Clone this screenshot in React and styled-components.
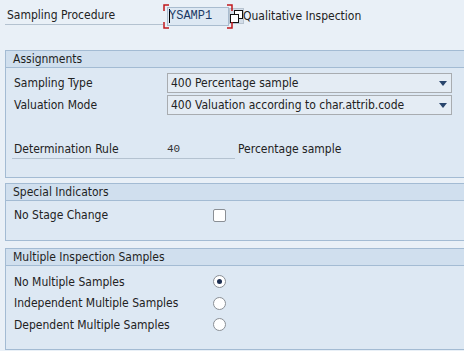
import React from "react";
import styled, { createGlobalStyle } from "styled-components";

const GlobalStyle = createGlobalStyle`
  html, body {
    margin: 0;
    padding: 0;
    background: #e9f0f7;
    overflow: hidden;
  }
  body {
    font-family: "DejaVu Sans Condensed", "DejaVu Sans", sans-serif;
    font-stretch: condensed;
    font-size: 12px;
    color: #222222;
  }
`;

const Page = styled.div`
  width: 464px;
  height: 351px;
  padding-top: 4px;
  box-sizing: border-box;
  background: #e9f0f7;
  white-space: nowrap;
`;

const TopRow = styled.div`
  display: flex;
  align-items: center;
  height: 24px;
  padding-left: 5px;
`;

const TopLabel = styled.div`
  width: 158px;
  height: 21px;
  line-height: 23px;
  padding-left: 2px;
  box-sizing: border-box;
  border-bottom: 1px solid #b4c2d0;
  align-self: flex-start;
`;

const FocusWrap = styled.div`
  position: relative;
  margin-left: 4px;
  display: flex;
  align-items: center;
`;

const Corners = styled.svg`
  position: absolute;
  left: -4px;
  top: -3px;
  pointer-events: none;
`;

const Field = styled.div`
  width: 62px;
  height: 19px;
  box-sizing: border-box;
  border: 1px solid #a9bccf;
  background: #dde8f3;
  font-family: "Liberation Mono", monospace;
  font-stretch: normal;
  font-size: 12px;
  color: #1b3a66;
  line-height: 17px;
  padding-left: 1px;
  display: flex;
  align-items: center;
`;

const Caret = styled.span`
  display: inline-block;
  width: 1px;
  height: 14px;
  background: #000;
  margin-right: -1px;
`;

const HelpButton = styled.div`
  width: 15px;
  height: 16px;
  box-sizing: border-box;
  border: 1px solid #b8c4d0;
  background: #d3dde8;
  display: flex;
  align-items: center;
  justify-content: center;
`;

const TopText = styled.div`
  margin-left: -1px;
`;

const Panel = styled.section`
  margin: ${(p) => p.$top}px -6px 0 5px;
  border: 1px solid #a3bbd3;
  background: #dde8f3;
`;

const PanelHeader = styled.div`
  height: 16px;
  line-height: 16px;
  padding-left: 7px;
  background: #d0dfee;
  border-bottom: 1px solid #a3bbd3;
  color: #1f1f1f;
`;

const PanelBody = styled.div`
  padding: ${(p) => p.$pt}px 0 ${(p) => p.$pb}px 8px;
`;

const Row = styled.div`
  display: flex;
  align-items: center;
  height: ${(p) => p.$h || 22}px;
`;

const Label = styled.div`
  width: ${(p) => p.$w || 153}px;
  flex: none;
`;

const Select = styled.div`
  width: 285px;
  height: 20px;
  box-sizing: border-box;
  border: 1px solid #a8acb0;
  background: #e4ecf4;
  display: flex;
  align-items: center;
  justify-content: space-between;
  padding: 0 4px 0 3px;
`;

const Arrow = styled.span`
  width: 0;
  height: 0;
  border-left: 4px solid transparent;
  border-right: 4px solid transparent;
  border-top: 5px solid #27446c;
`;

const Spacer = styled.div`
  height: 22px;
`;

const RuleLine = styled.div`
  display: flex;
  align-items: center;
  width: 223px;
  height: 21px;
  margin-left: -2px;
  padding-left: 2px;
  box-sizing: border-box;
  border-bottom: 1px solid #b4c2d0;
  align-self: flex-start;
  padding-top: 2px;
`;

const RuleValue = styled.span`
  font-family: "Liberation Mono", monospace;
  font-stretch: normal;
  font-size: 11px;
  color: #333;
`;

const RuleText = styled.div`
  margin-left: 3px;
`;

const Check = styled.span`
  display: inline-block;
  width: 13px;
  height: 13px;
  box-sizing: border-box;
  border: 1px solid #8a8f95;
  border-radius: 2px;
  background: #fff;
`;

const Radio = styled.span`
  display: inline-flex;
  align-items: center;
  justify-content: center;
  width: 13px;
  height: 13px;
  box-sizing: border-box;
  border: 1px solid #8a8f95;
  border-radius: 50%;
  background: #fff;
  &::after {
    content: "";
    width: 5px;
    height: 5px;
    border-radius: 50%;
    background: ${(p) => (p.$on ? "#1d2f52" : "transparent")};
  }
`;

const App = () => {
  const samples = [
    { text: "No Multiple Samples", on: true },
    { text: "Independent Multiple Samples", on: false },
    { text: "Dependent Multiple Samples", on: false },
  ];
  return (
    <>
      <GlobalStyle />
      <Page>
        <TopRow>
          <TopLabel>Sampling Procedure</TopLabel>
          <FocusWrap>
            <Corners width="70" height="25" viewBox="0 0 70 25">
              <g stroke="#c0171d" strokeWidth="1.5" fill="none">
                <path d="M1 7 V1 H6" />
                <path d="M1 18 V24 H6" />
                <path d="M69 7 V1 H64" />
                <path d="M69 18 V24 H64" />
              </g>
            </Corners>
            <Field>
              <Caret />
              YSAMP1
            </Field>
          </FocusWrap>
          <HelpButton>
            <svg width="13" height="13" viewBox="0 0 13 13">
              <rect x="4.5" y="0.5" width="8" height="8" fill="#fff" stroke="#111" />
              <rect x="0.5" y="4.5" width="8" height="8" fill="#fff" stroke="#111" />
            </svg>
          </HelpButton>
          <TopText>Qualitative Inspection</TopText>
        </TopRow>

        <Panel $top={22}>
          <PanelHeader>Assignments</PanelHeader>
          <PanelBody $pt={4} $pb={17}>
            <Row>
              <Label>Sampling Type</Label>
              <Select>
                400 Percentage sample
                <Arrow />
              </Select>
            </Row>
            <Row>
              <Label>Valuation Mode</Label>
              <Select>
                400 Valuation according to char.attrib.code
                <Arrow />
              </Select>
            </Row>
            <Spacer />
            <Row>
              <RuleLine>
                <Label>Determination Rule</Label>
                <RuleValue>40</RuleValue>
              </RuleLine>
              <RuleText>Percentage sample</RuleText>
            </Row>
          </PanelBody>
        </Panel>

        <Panel $top={5}>
          <PanelHeader>Special Indicators</PanelHeader>
          <PanelBody $pt={3} $pb={14}>
            <Row>
              <Label $w={199}>No Stage Change</Label>
              <Check />
            </Row>
          </PanelBody>
        </Panel>

        <Panel $top={7}>
          <PanelHeader>Multiple Inspection Samples</PanelHeader>
          <PanelBody $pt={5} $pb={13}>
            {samples.map((s) => (
              <Row key={s.text} $h={21.5}>
                <Label $w={199}>{s.text}</Label>
                <Radio $on={s.on} />
              </Row>
            ))}
          </PanelBody>
        </Panel>
      </Page>
    </>
  );
};

export default App;
